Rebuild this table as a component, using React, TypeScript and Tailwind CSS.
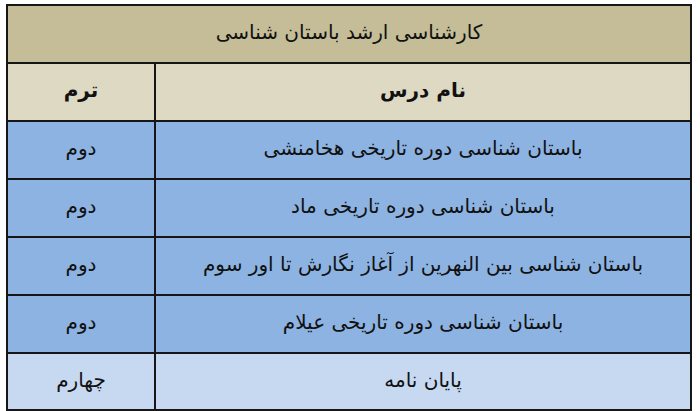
const rows = [
  { name: "باستان شناسی دوره تاریخی هخامنشی", term: "دوم", light: false },
  { name: "باستان شناسی دوره تاریخی ماد", term: "دوم", light: false },
  { name: "باستان شناسی بین النهرین از آغاز نگارش تا اور سوم", term: "دوم", light: false },
  { name: "باستان شناسی دوره تاریخی عیلام", term: "دوم", light: false },
  { name: "پایان نامه", term: "چهارم", light: true },
];

export default function App() {
  return (
    <div
      className="w-[700px] h-[411px] bg-white pt-[4px] pl-[6px]"
      style={{ fontFamily: '"DejaVu Sans", "Noto Sans", sans-serif' }}
    >
      <table
        dir="rtl"
        className="w-[686px] border-collapse border-2 border-[#161616] text-[#111] text-[20px]"
      >
        <tbody>
          <tr className="h-[58px] bg-[#c4bd97]">
            <td colSpan={2} className="border-2 border-[#161616] text-center pb-1">
              کارشناسی ارشد باستان شناسی
            </td>
          </tr>
          <tr className="h-[58px] bg-[#ddd9c3] font-bold">
            <td className="border-2 border-[#161616] text-center pb-1">نام درس</td>
            <td className="w-[148px] border-2 border-[#161616] text-center pb-1">ترم</td>
          </tr>
          {rows.map((r) => (
            <tr
              key={r.name}
              className={r.light ? "h-[57px] bg-[#c6d9f1]" : "h-[58px] bg-[#8db3e2]"}
            >
              <td className="border-2 border-[#161616] text-center pb-1">{r.name}</td>
              <td className="w-[148px] border-2 border-[#161616] text-center pb-1">{r.term}</td>
            </tr>
          ))}
        </tbody>
      </table>
    </div>
  );
}
